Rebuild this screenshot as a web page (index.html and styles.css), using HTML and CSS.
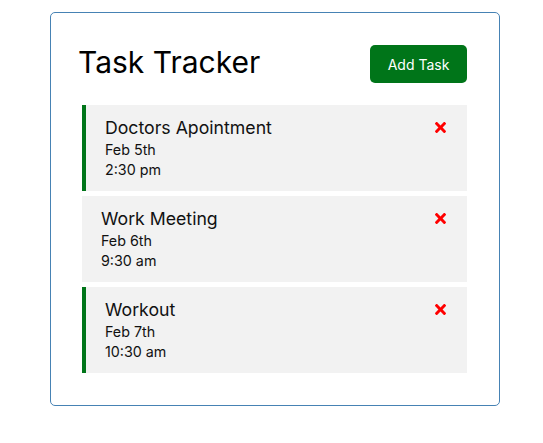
FILE: index.html
```html
<!DOCTYPE html>
<html lang="en">
<head>
<meta charset="utf-8">
<title>Task Tracker</title>
<link rel="stylesheet" href="styles.css">
</head>
<body>
<div class="container">
  <header class="header">
    <h1 class="title">Task Tracker</h1>
    <button class="btn">Add Task</button>
  </header>
  <div class="tasks">
    <div class="task reminder">
      <h3 class="task-title">Doctors Apointment
        <svg class="del" viewBox="0 80 352 352" aria-hidden="true"><path d="M242.72 256l100.07-100.07c12.28-12.28 12.28-32.19 0-44.48l-22.24-22.24c-12.28-12.28-32.19-12.28-44.48 0L176 189.28 75.93 89.21c-12.28-12.28-32.19-12.28-44.48 0L9.21 111.45c-12.28 12.28-12.28 32.19 0 44.48L109.28 256 9.21 356.07c-12.28 12.28-12.28 32.19 0 44.48l22.24 22.24c12.28 12.28 32.2 12.28 44.48 0L176 322.72l100.07 100.07c12.28 12.28 32.2 12.28 44.48 0l22.24-22.240c12.28-12.28 12.28-32.19 0-44.48L242.72 256z"/></svg>
      </h3>
      <p class="line">Feb 5th</p>
      <p class="line">2:30 pm</p>
    </div>
    <div class="task">
      <h3 class="task-title">Work Meeting
        <svg class="del" viewBox="0 80 352 352" aria-hidden="true"><path d="M242.72 256l100.07-100.07c12.28-12.28 12.28-32.19 0-44.48l-22.24-22.24c-12.28-12.28-32.19-12.28-44.48 0L176 189.28 75.93 89.21c-12.28-12.28-32.19-12.28-44.48 0L9.21 111.45c-12.28 12.28-12.28 32.19 0 44.48L109.28 256 9.21 356.07c-12.28 12.28-12.28 32.19 0 44.48l22.24 22.24c12.28 12.28 32.2 12.28 44.48 0L176 322.72l100.07 100.07c12.28 12.28 32.2 12.28 44.48 0l22.24-22.24c12.28-12.28 12.28-32.19 0-44.48L242.72 256z"/></svg>
      </h3>
      <p class="line">Feb 6th</p>
      <p class="line">9:30 am</p>
    </div>
    <div class="task reminder">
      <h3 class="task-title">Workout
        <svg class="del" viewBox="0 80 352 352" aria-hidden="true"><path d="M242.72 256l100.07-100.07c12.28-12.28 12.28-32.19 0-44.48l-22.24-22.24c-12.28-12.28-32.19-12.28-44.48 0L176 189.28 75.93 89.21c-12.28-12.28-32.19-12.28-44.48 0L9.21 111.45c-12.28 12.28-12.28 32.19 0 44.48L109.28 256 9.21 356.07c-12.28 12.28-12.28 32.19 0 44.48l22.24 22.24c12.28 12.28 32.2 12.28 44.48 0L176 322.72l100.07 100.07c12.28 12.28 32.2 12.28 44.48 0l22.24-22.24c12.28-12.28 12.28-32.19 0-44.48L242.72 256z"/></svg>
      </h3>
      <p class="line">Feb 7th</p>
      <p class="line">10:30 am</p>
    </div>
  </div>
</div>
</body>
</html>
```

FILE: styles.css
```css
* {
  box-sizing: border-box;
  margin: 0;
  padding: 0;
}

body {
  font-family: Inter, "Open Sans", sans-serif;
  color: #111;
  background: #fff;
}

.container {
  width: 450px;
  margin: 12px 0 0 50px;
  border: 1px solid #4682b4;
  border-radius: 5px;
  padding: 27px 27px 27px 26px;
}

.header {
  display: flex;
  align-items: center;
  justify-content: space-between;
  margin-bottom: 12px;
}

.title {
  font-size: 30px;
  font-weight: 400;
  line-height: 44px;
  color: #000;
  padding-left: 1px;
  padding-bottom: 4px;
}

.btn {
  margin: 5px;
  width: 97px;
  height: 38px;
  border: none;
  border-radius: 5px;
  background: #007519;
  color: #fff;
  font-family: inherit;
  font-size: 14px;
  cursor: pointer;
}

.tasks {
  display: flex;
  flex-direction: column;
  gap: 5px;
  padding: 5px;
}

.task {
  background: #f2f2f2;
  padding: 10px 20px 10px 19px;
  height: 86px;
}

.task.reminder {
  border-left: 4px solid #007519;
}

.task-title {
  display: flex;
  align-items: center;
  justify-content: space-between;
  font-size: 17.7px;
  font-weight: 400;
  line-height: 25px;
}

.del {
  width: 11px;
  height: 11px;
  fill: #ff0000;
  margin-right: 1px;
}

.line {
  font-size: 14.3px;
  line-height: 20px;
}
```
